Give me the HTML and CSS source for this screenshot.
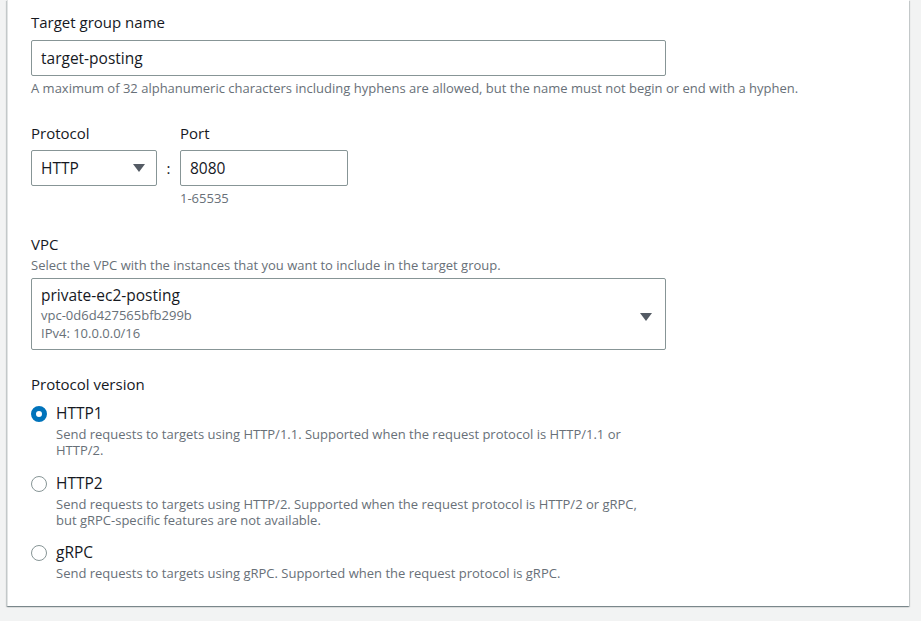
FILE: index.html
```html
<!DOCTYPE html>
<html lang="en">
<head>
<meta charset="utf-8">
<title>Target group</title>
<link rel="stylesheet" href="styles.css">
</head>
<body>
<div class="card">
  <div class="field">
    <div class="label">Target group name</div>
    <div class="input wide">target-posting</div>
    <div class="hint">A maximum of 32 alphanumeric characters including hyphens are allowed, but the name must not begin or end with a hyphen.</div>
  </div>

  <div class="field row">
    <div class="col">
      <div class="label">Protocol</div>
      <div class="input select proto">
        <span>HTTP</span>
        <svg class="caret" width="12" height="8" viewBox="0 0 12 8"><path d="M0 0h12L6 8z" fill="#545b64"/></svg>
      </div>
    </div>
    <div class="colon">:</div>
    <div class="col">
      <div class="label">Port</div>
      <div class="input port">8080</div>
      <div class="hint">1-65535</div>
    </div>
  </div>

  <div class="field vpc-field">
    <div class="label">VPC</div>
    <div class="desc">Select the VPC with the instances that you want to include in the target group.</div>
    <div class="input select vpc">
      <div class="vpc-text">
        <div class="vpc-name">private-ec2-posting</div>
        <div class="vpc-meta">vpc-0d6d427565bfb299b</div>
        <div class="vpc-meta">IPv4: 10.0.0.0/16</div>
      </div>
      <svg class="caret" width="12" height="8" viewBox="0 0 12 8"><path d="M0 0h12L6 8z" fill="#545b64"/></svg>
    </div>
  </div>

  <div class="field">
    <div class="label">Protocol version</div>
    <div class="radios">
      <div class="radio">
        <svg class="dot" width="16" height="16" viewBox="0 0 16 16"><circle cx="8" cy="8" r="5.5" fill="#fff" stroke="#0073bb" stroke-width="5"/></svg>
        <div class="radio-body">
          <div class="radio-label">HTTP1</div>
          <div class="radio-desc">Send requests to targets using HTTP/1.1. Supported when the request protocol is HTTP/1.1 or<br>HTTP/2.</div>
        </div>
      </div>
      <div class="radio">
        <svg class="dot" width="16" height="16" viewBox="0 0 16 16"><circle cx="8" cy="8" r="7.5" fill="#fff" stroke="#879596" stroke-width="1"/></svg>
        <div class="radio-body">
          <div class="radio-label">HTTP2</div>
          <div class="radio-desc">Send requests to targets using HTTP/2. Supported when the request protocol is HTTP/2 or gRPC,<br>but gRPC-specific features are not available.</div>
        </div>
      </div>
      <div class="radio">
        <svg class="dot" width="16" height="16" viewBox="0 0 16 16"><circle cx="8" cy="8" r="7.5" fill="#fff" stroke="#879596" stroke-width="1"/></svg>
        <div class="radio-body">
          <div class="radio-label">gRPC</div>
          <div class="radio-desc">Send requests to targets using gRPC. Supported when the request protocol is gRPC.</div>
        </div>
      </div>
    </div>
  </div>
</div>
</body>
</html>
```

FILE: styles.css
```css
* { box-sizing: border-box; }
html, body { margin: 0; padding: 0; }
body {
  background: #f2f3f3;
  font-family: "Open Sans", "Noto Sans", sans-serif;
  color: #16191f;
  font-size: 15px;
  height: 621px;
  overflow: hidden;
}
.card {
  background: #fff;
  margin-left: 7px;
  width: 902px;
  padding: 11px 24px 25px 23px;
  box-shadow: 0 1px 1px 0 rgba(0,28,36,.3), 1px 1px 1px 0 rgba(0,28,36,.15), -1px 1px 1px 0 rgba(0,28,36,.15);
  border-left: 1px solid #e1e4e4;
}
.field { margin-bottom: 26px; }
.field:last-child { margin-bottom: 0; }
.field.row { margin-bottom: 27px; }
.vpc-field { margin-bottom: 23px; }
.label {
  font-size: 15px;
  line-height: 22px;
  margin-bottom: 7px;
}
.input {
  height: 36px;
  border: 1px solid #879596;
  border-radius: 2px;
  padding: 0 9px;
  font-size: 15.5px;
  line-height: 34px;
  color: #16191f;
  background: #fff;
}
.wide { width: 635px; }
.hint {
  font-size: 13px;
  line-height: 16px;
  color: #687078;
  margin-top: 4px;
}
.row { display: flex; align-items: flex-start; }
.row .label { margin-bottom: 6px; }
.col { display: flex; flex-direction: column; }
.colon {
  width: 23px;
  text-align: center;
  margin-top: 28px;
  line-height: 36px;
  font-size: 15px;
}
.select { display: flex; align-items: center; justify-content: space-between; }
.proto { width: 126px; padding-right: 11px; }
.port { width: 168px; }
.desc {
  font-size: 13px;
  line-height: 16px;
  color: #687078;
  margin-top: -5px;
  margin-bottom: 5px;
}
.vpc {
  width: 635px;
  height: 72px;
  padding: 5px 13px 0 9px;
  align-items: flex-start;
}
.vpc .caret { margin-top: 29px; }
.vpc-name { font-size: 15.5px; line-height: 22px; }
.vpc-meta { font-size: 13px; line-height: 18px; color: #687078; }
.radios { display: flex; flex-direction: column; gap: 13.5px; margin-top: 1px; }
.radio { display: flex; align-items: flex-start; gap: 9px; }
.dot { margin-top: 4px; flex: none; }
.radio-label { font-size: 15.5px; line-height: 22px; }
.radio-desc {
  font-size: 13px;
  line-height: 16px;
  color: #687078;
  margin-top: 2px;
}
```
